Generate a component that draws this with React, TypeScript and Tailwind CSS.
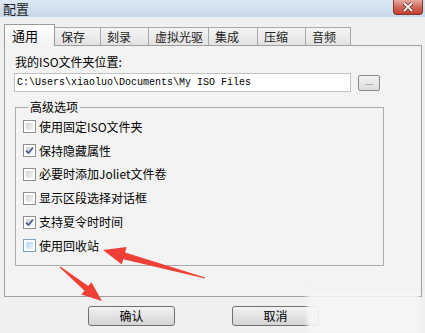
import React from "react"

const tabs = [
    { label: "保存", w: "w-[46px]" },
    { label: "刻录", w: "w-[48px]" },
    { label: "虚拟光驱", w: "w-[60px]" },
    { label: "集成", w: "w-[49px]" },
    { label: "压缩", w: "w-[48px]" },
    { label: "音频", w: "w-[45px]" },
]

const options = [
    { label: "使用固定ISO文件夹", checked: false },
    { label: "保持隐藏属性", checked: true },
    { label: "必要时添加Joliet文件卷", checked: false },
    { label: "显示区段选择对话框", checked: false },
    { label: "支持夏令时时间", checked: true },
    { label: "使用回收站", checked: false, hot: true },
]

function CheckBox({ checked, hot }: { checked: boolean; hot?: boolean }) {
    return (
        <span
            className={`relative flex w-[13px] h-[13px] shrink-0 border p-[2px] bg-white ${hot ? "border-[#7fa3bf]" : "border-[#8e8f8f]"
                }`}
        >
            <span
                className={`flex-1 bg-linear-to-br ${hot ? "from-[#b3d8f4] to-[#e4f3fd]" : "from-[#cfcfcf] to-[#f7f7f7]"
                    }`}
            />
            {checked && (
                <svg className="absolute inset-0" width="11" height="11" viewBox="0 0 11 11">
                    <path d="M2 5.5 L4.5 8 L9 2.5" fill="none" stroke="#43598d" strokeWidth="1.7" />
                </svg>
            )}
        </span>
    )
}

export default function App() {
    return (
        <div className="relative w-[425px] h-[333px] overflow-hidden bg-[#f0f0f0] font-['Noto_Sans_CJK_SC',sans-serif] text-black">
            {/* 标题栏 */}
            <div className="flex items-start justify-between h-[17px] bg-linear-to-b from-[#dde8f4] to-[#c6d8ec]">
                <span className="pl-[3px] pt-[1px] text-[13px] leading-[15px] text-[#1b1b1b]">配置</span>
                <div className="flex items-center justify-center w-[30px] h-[15px] mr-[2px] rounded-b-[4px] border border-t-0 border-[#84362f] bg-linear-to-b from-[#e7aaa0] via-[#d26a5e] to-[#c23c2f]">
                    <svg width="12" height="10" viewBox="0 0 12 10">
                        <path d="M2 1 L10 9 M10 1 L2 9" stroke="#5a2320" strokeWidth="3.2" />
                        <path d="M2 1 L10 9 M10 1 L2 9" stroke="#ffffff" strokeWidth="1.8" />
                    </svg>
                </div>
            </div>

            {/* 选项卡 */}
            <div className="flex items-end h-[28px] pt-[7px] pl-[4px]">
                <div className="relative z-10 -mb-px flex items-start w-[51px] h-[22px] pl-[7px] pt-[3px] border border-b-0 border-[#9a9a9a] bg-linear-to-b from-[#fdfdfd] to-[#f3f3f3] text-[13px] leading-[15px]">
                    通用
                </div>
                {tabs.map((t) => (
                    <div
                        key={t.label}
                        className={`${t.w} h-[18px] pl-[6px] border-t border-r border-[#a9a9a9] bg-linear-to-b from-[#f4f4f4] to-[#e2e2e2] text-[12px] leading-[17px] text-[#222]`}
                    >
                        {t.label}
                    </div>
                ))}
            </div>

            {/* 面板 */}
            <div className="ml-[4px] w-[418px] h-[252px] border border-[#a0a0a0] bg-[#f3f3f3] pl-[10px] pt-[9px]">
                <div className="text-[12px] leading-[14px]">我的ISO文件夹位置:</div>
                <div className="flex items-center gap-[7px] mt-[4px] -ml-px">
                    <div className="flex items-center w-[337px] h-[19px] pl-[2px] border border-[#c3c3c3] bg-white font-['Liberation_Mono',monospace] text-[10px]">
                        C:\Users\xiaoluo\Documents\My ISO Files
                    </div>
                    <div className="flex items-center justify-center w-[22px] h-[16px] rounded-[2px] border border-[#8a8a8a] bg-linear-to-b from-[#f4f4f4] to-[#dcdcdc] font-['Liberation_Sans',sans-serif] text-[9px] leading-none text-[#555]">
                        ...
                    </div>
                </div>

                <fieldset className="mt-[8px] w-[369px] h-[166px] border border-[#acacac] pl-[7px] pt-[1px]">
                    <legend className="ml-[5px] px-[2px] text-[12px] leading-[14px]">高级选项</legend>
                    {options.map((o) => (
                        <div key={o.label} className="flex items-center gap-[3px] h-[23.8px]">
                            <CheckBox checked={o.checked} hot={o.hot} />
                            <span className="text-[12px] leading-[14px]">{o.label}</span>
                        </div>
                    ))}
                </fieldset>
            </div>

            {/* 按钮 */}
            <div className="flex gap-[57px] pl-[88px] mt-[9px]">
                <div className="flex items-center justify-center w-[87px] h-[20px] rounded-[3px] border border-[#707070] bg-linear-to-b from-[#f3f3f3] to-[#d4d4d4] text-[12px]">
                    确认
                </div>
                <div className="flex items-center justify-center w-[87px] h-[20px] rounded-[3px] border border-[#707070] bg-linear-to-b from-[#f3f3f3] to-[#d4d4d4] text-[12px]">
                    取消
                </div>
            </div>

            {/* 水印遮挡 */}
            <div className="absolute left-[307px] top-[292px] w-[112px] h-[41px] bg-[#f6f6f6]/90 blur-[2px]" />

            {/* 红色箭头 */}
            <svg className="absolute inset-0 pointer-events-none" width="425" height="333" viewBox="0 0 425 333">
                <polygon
                    fill="#ee4036"
                    points="205.1,277.5 125.1,252.4 126.6,247.1 103,250 121.8,264.5 123.3,259.2 204.9,278.5"
                />
                <polygon
                    fill="#ee4036"
                    points="60.3,266.6 88.3,286.1 91.4,282.2 102,301 81.4,294.6 84.5,290.7 59.7,267.4"
                />
            </svg>
        </div>
    )
}
